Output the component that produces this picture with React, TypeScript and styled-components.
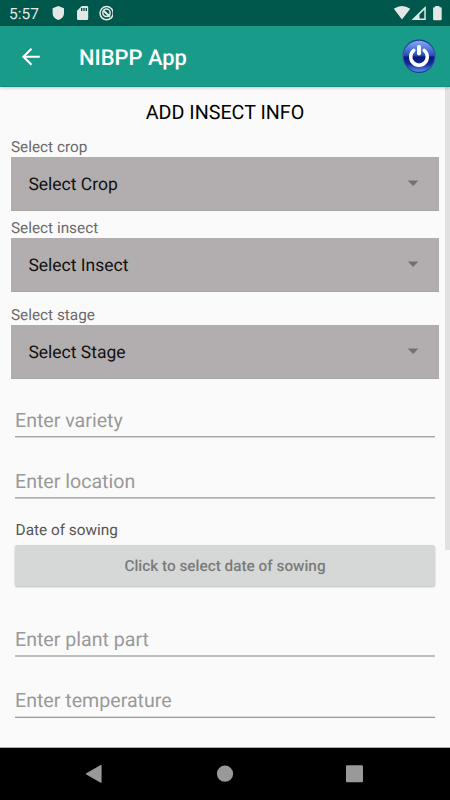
import React from "react";
import styled, { createGlobalStyle } from "styled-components";

const GlobalStyle = createGlobalStyle`
  *, *::before, *::after { box-sizing: border-box; }
  html, body { margin: 0; padding: 0; overflow: hidden; }
  body { font-family: Roboto, "Liberation Sans", sans-serif; background: #fafafa; text-rendering: geometricPrecision; }
  button, input { font: inherit; border: 0; padding: 0; margin: 0; background: none; text-rendering: inherit; }
`;

const Screen = styled.div`
  width: 450px;
  height: 800px;
  display: flex;
  flex-direction: column;
  background: #fafafa;
`;

const StatusBar = styled.div`
  height: 26px;
  flex: none;
  display: flex;
  align-items: center;
  justify-content: space-between;
  background: #00574b;
  color: #e3e8e7;
`;

const StatusGroup = styled.div`
  display: flex;
  align-items: center;
  height: 26px;
`;

const Clock = styled.span`
  width: 43px;
  padding-left: 9px;
  padding-top: 2px;
  font-size: 15.5px;
  line-height: 23px;
`;

const Toolbar = styled.header`
  height: 61px;
  flex: none;
  display: flex;
  align-items: center;
  padding: 0 14px 0 21px;
  background: #189b88;
  border-bottom: 1px solid #14917e;
  position: relative;
  box-shadow: 0 1px 3px rgba(0, 0, 0, 0.22);
`;

const IconButton = styled.button`
  display: flex;
`;

const AppTitle = styled.h1`
  flex: 1;
  margin: 6px 0 0 38px;
  color: #fff;
  font-size: 21.9px;
  font-weight: 500;
  line-height: 28px;
`;

const Body = styled.main`
  flex: 1;
  min-height: 0;
  display: flex;
  overflow: hidden;
`;

const Form = styled.form`
  flex: 1;
  padding: 0 6px 0 11px;
  display: flex;
  flex-direction: column;
`;

const ScrollThumb = styled.div`
  width: 5px;
  height: 463px;
  background: #e1e1e1;
`;

const Heading = styled.h2`
  height: 50px;
  margin: 0;
  text-align: center;
  color: #000;
  font-size: 19.7px;
  font-weight: 400;
  line-height: 52px;
`;

const Label = styled.label<{ $gap?: number }>`
  height: 20px;
  margin-top: ${(p) => p.$gap ?? 0}px;
  color: #6a6a6a;
  font-size: 15.33px;
  line-height: 20px;
`;

const Spinner = styled.div`
  height: 54px;
  flex: none;
  display: flex;
  align-items: center;
  justify-content: space-between;
  padding: 0 20px 0 17.4px;
  background: #b2aeaf;
  border-bottom: 1px solid #a9a6a7;
  color: #111;
  font-size: 17.5px;
`;

const SpinnerValue = styled.span`
  padding-top: 2px;
`;

const Fields = styled.div`
  display: flex;
  flex-direction: column;
  padding: 0 4px;
`;

const TextField = styled.input<{ $gap: number; $upper: string; $lower: string }>`
  height: 36px;
  margin-top: ${(p) => p.$gap}px;
  font-size: 19.6px;
  background: linear-gradient(${(p) => p.$upper}, ${(p) => p.$upper}) 0 34px / 100% 1px no-repeat,
    linear-gradient(${(p) => p.$lower}, ${(p) => p.$lower}) 0 35px / 100% 1px no-repeat;
  &::placeholder { color: #999; opacity: 1; }
`;

const DateLabel = styled(Label)`
  padding-left: 0.6px;
  color: #555;
`;

const DateButton = styled.button`
  height: 41px;
  margin-top: 5px;
  border-radius: 2px;
  background: #d6d8d7;
  color: #7b7b7b;
  font-size: 15.33px;
  font-weight: 500;
  box-shadow: 0 1px 2px rgba(0, 0, 0, 0.25);
`;

const NavBar = styled.nav`
  height: 53px;
  flex: none;
  display: flex;
  align-items: center;
  justify-content: center;
  gap: 105px;
  padding-right: 1px;
  background: #000;
  border-top: 1px solid #adadad;
`;

const SystemIcons = () => (
  <svg width="70" height="26" viewBox="0 0 70 26" fill="#e3e8e7">
    <path d="M15.3 6 21 8.3V13c0 3.4-2.4 6-5.7 7-3.3-1-5.7-3.6-5.7-7V8.3Z" />
    <path fillRule="evenodd" d="M38.8 6h5.1q1.3 0 1.3 1.3v11.4q0 1.3-1.3 1.3h-8.6q-1.3 0-1.3-1.3v-8ZM38 8v3h1.4V8Zm2.3 0v3h1.4V8Zm2.3 0v3H44V8Z" />
    <circle cx="63.6" cy="13.2" r="6.6" fill="none" stroke="#e3e8e7" strokeWidth="1.5" />
    <circle cx="63.5" cy="12.8" r="3.7" fill="none" stroke="#e3e8e7" strokeWidth="1.5" />
    <path d="m60.1 10.2 6.9 6.6" fill="none" stroke="#e3e8e7" strokeWidth="2" />
  </svg>
);

const SignalIcons = () => (
  <svg width="60" height="26" viewBox="390 0 60 26" fill="#e3e8e7">
    <path d="M393.8 8.8Q402 3.2 410.2 8.8L402 19.5Z" />
    <path fillRule="evenodd" d="M425.8 6v14h-14.3Zm-1.5 3.8-4.8 4.8v4h4.8Z" />
    <path d="M435.2 7.2V6h4.2v1.2h1.3q1 0 1 1v11q0 1-1 1h-6.6q-1 0-1-1v-11q0-1 1-1Z" />
  </svg>
);

const BackIcon = () => (
  <svg width="20" height="20" viewBox="0 0 20 20" fill="none" stroke="#fff" strokeWidth="2">
    <path d="M18.8 10.7H2.5M10.5 2.7 2.4 10.7l8.1 8.1" />
  </svg>
);

const PowerIcon = () => (
  <svg width="34" height="34" viewBox="0 0 34 34">
    <defs>
      <linearGradient id="sphere" x1="0" y1="0" x2="0" y2="1">
        <stop offset="0" stopColor="#86aaf8" />
        <stop offset="0.25" stopColor="#547bdd" />
        <stop offset="0.47" stopColor="#2d4fb4" />
        <stop offset="0.53" stopColor="#06187a" />
        <stop offset="0.75" stopColor="#102c94" />
        <stop offset="1" stopColor="#578df0" />
      </linearGradient>
      <linearGradient id="rim" x1="0" y1="0" x2="0" y2="1">
        <stop offset="0" stopColor="#1b3888" />
        <stop offset="0.6" stopColor="#3d60b9" />
        <stop offset="1" stopColor="#183b91" />
      </linearGradient>
    </defs>
    <circle cx="17" cy="17.2" r="16.7" fill="url(#rim)" />
    <circle cx="17" cy="17.2" r="15.5" fill="url(#sphere)" />
    <g fill="none" stroke="#fff" strokeLinecap="round">
      <path d="M11.8 11.4a8.3 8.3 0 1 0 10.4 0" strokeWidth="3.5" />
      <path d="M17 8.1v6.5" strokeWidth="4" />
    </g>
  </svg>
);

const Caret = () => (
  <svg width="12" height="7" viewBox="0 0 12 7">
    <path d="M.8.6h10.6L6.1 6Z" fill="#727071" />
  </svg>
);

const NavIcon = ({ kind }: { kind: "back" | "home" | "recent" }) => (
  <svg width="25" height="20" viewBox="0 0 25 20" fill="#999">
    {kind === "back" && <path d="M19.6 1.4v16.8q0 1-.9.5L4.3 10.5q-.8-.6 0-1.2L18.7.9q.9-.5.9.5Z" />}
    {kind === "home" && <circle cx="13" cy="9.7" r="8.1" />}
    {kind === "recent" && <rect x="4" y="1.2" width="17" height="17" rx="1" />}
  </svg>
);

const Picker = ({ label, value, gap }: { label: string; value: string; gap?: number }) => (
  <>
    <Label $gap={gap}>{label}</Label>
    <Spinner>
      <SpinnerValue>{value}</SpinnerValue>
      <Caret />
    </Spinner>
  </>
);

export default function App() {
  return (
    <>
      <GlobalStyle />
      <Screen>
        <StatusBar>
          <StatusGroup>
            <Clock>5:57</Clock>
            <SystemIcons />
          </StatusGroup>
          <StatusGroup>
            <SignalIcons />
          </StatusGroup>
        </StatusBar>
        <Toolbar>
          <IconButton type="button" aria-label="Back">
            <BackIcon />
          </IconButton>
          <AppTitle>NIBPP App</AppTitle>
          <IconButton type="button" aria-label="Log out">
            <PowerIcon />
          </IconButton>
        </Toolbar>
        <Body>
          <Form>
            <Heading>ADD INSECT INFO</Heading>
            <Picker label="Select crop" value="Select Crop" />
            <Picker label="Select insect" value="Select Insect" gap={7} />
            <Picker label="Select stage" value="Select Stage" gap={13} />
            <Fields>
              <TextField placeholder="Enter variety" $gap={23} $upper="#a6a6a6" $lower="#d6d6d6" />
              <TextField placeholder="Enter location" $gap={25} $upper="#b0b0b0" $lower="#c6c6c6" />
              <DateLabel $gap={21}>Date of sowing</DateLabel>
              <DateButton type="button">Click to select date of sowing</DateButton>
              <TextField placeholder="Enter plant part" $gap={35} $upper="#bebebe" $lower="#bebebe" />
              <TextField placeholder="Enter temperature" $gap={25} $upper="#dedede" $lower="#9c9c9c" />
            </Fields>
          </Form>
          <ScrollThumb />
        </Body>
        <NavBar>
          <NavIcon kind="back" />
          <NavIcon kind="home" />
          <NavIcon kind="recent" />
        </NavBar>
      </Screen>
    </>
  );
}
